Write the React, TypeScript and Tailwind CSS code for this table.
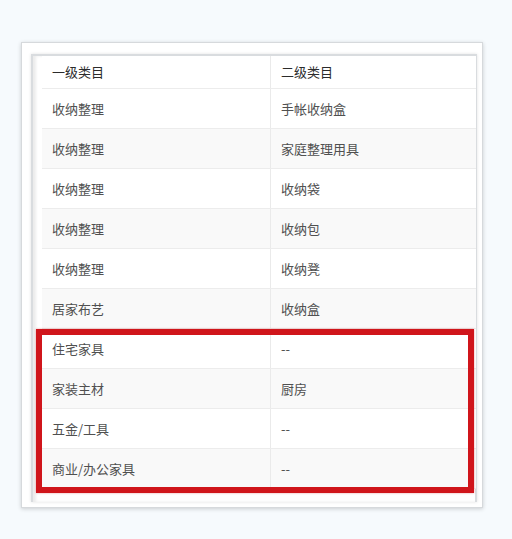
import React from "react";

const rows: [string, string][] = [
  ["收纳整理", "手帐收纳盒"],
  ["收纳整理", "家庭整理用具"],
  ["收纳整理", "收纳袋"],
  ["收纳整理", "收纳包"],
  ["收纳整理", "收纳凳"],
  ["居家布艺", "收纳盒"],
  ["住宅家具", "--"],
  ["家装主材", "厨房"],
  ["五金/工具", "--"],
  ["商业/办公家具", "--"],
];

export default function App() {
  return (
    <div
      className="w-[512px] h-[539px] bg-[#f6fafd] pt-[42px] pl-[21px]"
      style={{ fontFamily: '"Noto Sans CJK SC", "Liberation Sans", sans-serif' }}
    >
      <div className="relative w-[462px] h-[466px] bg-white border border-[#d6d9dc] shadow-[0_1px_4px_rgba(0,0,0,0.18)] pt-[11px] pl-[9px]">
        <div className="w-[446px] h-[448px] bg-white border-t-2 border-l-2 border-r-2 border-[#d9dcdf] shadow-[inset_3px_0_3px_rgba(0,0,0,0.08),0_0_3px_rgba(0,0,0,0.12)] pl-[9px] flex flex-col">
          <div className="w-[434px] flex flex-col text-[13px]">
            <div className="flex h-[33px] items-center border-b border-[#ececec] bg-white text-[#2b2b2b]">
              <div className="w-[229px] h-full flex items-center pl-[10px] border-r border-[#eaeaea]">一级类目</div>
              <div className="flex-1 h-full flex items-center pl-[10px]">二级类目</div>
            </div>
            {rows.map(([a, b], i) => (
              <div
                key={i}
                className={
                  "flex h-[40px] items-center border-b border-[#ececec] text-[#505050] " +
                  (i % 2 === 1 ? "bg-[#f9f9f9]" : "bg-white")
                }
              >
                <div className="w-[229px] h-full flex items-center pl-[10px] border-r border-[#eaeaea]">{a}</div>
                <div className="flex-1 h-full flex items-center pl-[10px]">{b}</div>
              </div>
            ))}
          </div>
        </div>
        <div className="absolute left-[14px] top-[286px] w-[438px] h-[164px] border-[6px] border-[#d0151b] shadow-[0_0_2px_rgba(208,21,27,0.4)]" />
      </div>
    </div>
  );
}
